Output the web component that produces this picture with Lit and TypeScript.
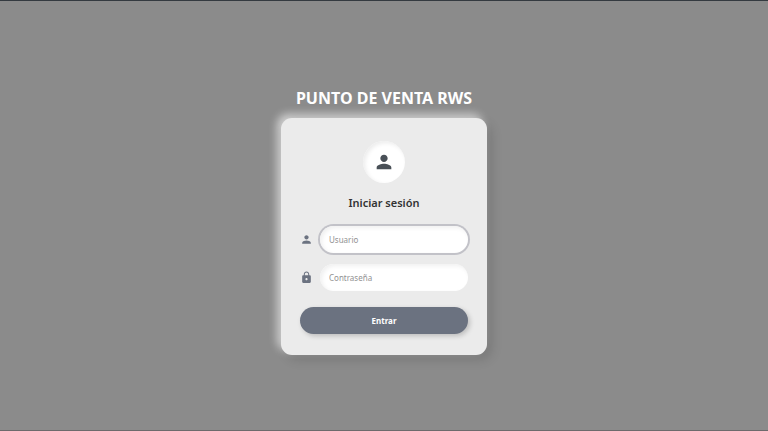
import { LitElement, html, css } from "lit";
import { customElement } from "lit/decorators.js";

@customElement("app-root")
export class AppRoot extends LitElement {
  static styles = css`
    :host {
      display: block;
      font-family: "Noto Sans", "Open Sans", sans-serif;
      color: #333;
    }
    * {
      box-sizing: border-box;
    }
    .page {
      min-height: 100vh;
      display: flex;
      flex-direction: column;
      align-items: center;
      justify-content: center;
      padding: 26px 16px 16px;
      background: #8b8b8b;
      border-top: 1px solid #343a40;
      border-bottom: 1px solid #6d6a6c;
    }
    .brand {
      margin: 0 0 8px;
      font-size: 16px;
      line-height: 24px;
      font-weight: 700;
      color: #fff;
    }
    .card {
      width: 100%;
      max-width: 206px;
      padding: 23px 19px 21px;
      display: flex;
      flex-direction: column;
      border-radius: 11px;
      background: #ebebeb;
      box-shadow: 5px 5px 11px rgba(0, 0, 0, 0.13), -4px -4px 9px rgba(255, 255, 255, 0.6);
    }
    .avatar {
      align-self: center;
      width: 42px;
      height: 42px;
      display: grid;
      place-items: center;
      border-radius: 50%;
      background: #fff;
      box-shadow: inset 2px 2px 4px #ececec;
      color: #495057;
    }
    .avatar svg {
      width: 22px;
      height: 22px;
    }
    svg {
      display: block;
      fill: currentColor;
    }
    .heading {
      margin: 8px 0 11px;
      font-size: 11px;
      line-height: 24px;
      font-weight: 600;
      text-align: center;
    }
    .form {
      display: flex;
      flex-direction: column;
      gap: 11px;
    }
    .field {
      display: flex;
      align-items: center;
      gap: 7px;
    }
    .field label {
      flex: none;
      color: #6b7280;
    }
    .field svg {
      width: 13px;
      height: 13px;
    }
    .input {
      flex: 1;
      min-width: 0;
      height: 27px;
      padding: 0 9px;
      border: 0;
      border-radius: 14px;
      outline: none;
      background: #fff;
      box-shadow: inset 2px 2px 4px #f0f0f0;
      font: inherit;
      font-size: 8px;
      color: #333;
    }
    .input::placeholder {
      color: #929292;
      opacity: 1;
    }
    .input.active {
      box-shadow: 0 0 0 2px #c2c2c8, inset 2px 2px 4px #f0f0f0;
    }
    .submit {
      height: 27px;
      margin-top: 5px;
      border: 0;
      border-radius: 14px;
      background: #6b7280;
      box-shadow: 2px 2px 5px rgba(0, 0, 0, 0.2);
      color: #fff;
      font: inherit;
      font-size: 8px;
      font-weight: 700;
    }
  `;

  private personIcon() {
    return html`<svg viewBox="0 0 24 24" aria-hidden="true">
      <path d="M12 12c2.21 0 4-1.79 4-4s-1.79-4-4-4-4 1.79-4 4 1.79 4 4 4zm0 2c-2.67 0-8 1.34-8 4v2h16v-2c0-2.66-5.33-4-8-4z" />
    </svg>`;
  }

  private lockIcon() {
    return html`<svg viewBox="0 0 24 24" aria-hidden="true">
      <path d="M18 8h-1V6c0-2.76-2.24-5-5-5S7 3.24 7 6v2H6c-1.1 0-2 .9-2 2v10c0 1.1.9 2 2 2h12c1.1 0 2-.9 2-2V10c0-1.1-.9-2-2-2zm-6 9c-1.1 0-2-.9-2-2s.9-2 2-2 2 .9 2 2-.9 2-2 2zm3.1-9H8.9V6c0-1.71 1.39-3.1 3.1-3.1 1.71 0 3.1 1.39 3.1 3.1v2z" />
    </svg>`;
  }

  render() {
    return html`
      <main class="page">
        <h1 class="brand">PUNTO DE VENTA RWS</h1>
        <section class="card">
          <div class="avatar">${this.personIcon()}</div>
          <h2 class="heading">Iniciar sesión</h2>
          <form class="form" @submit=${(e: Event) => e.preventDefault()}>
            <div class="field">
              <label for="user" aria-label="Usuario">${this.personIcon()}</label>
              <input class="input active" id="user" type="text" placeholder="Usuario" />
            </div>
            <div class="field">
              <label for="password" aria-label="Contraseña">${this.lockIcon()}</label>
              <input class="input" id="password" type="password" placeholder="Contraseña" />
            </div>
            <button class="submit" type="submit">Entrar</button>
          </form>
        </section>
      </main>
    `;
  }
}
